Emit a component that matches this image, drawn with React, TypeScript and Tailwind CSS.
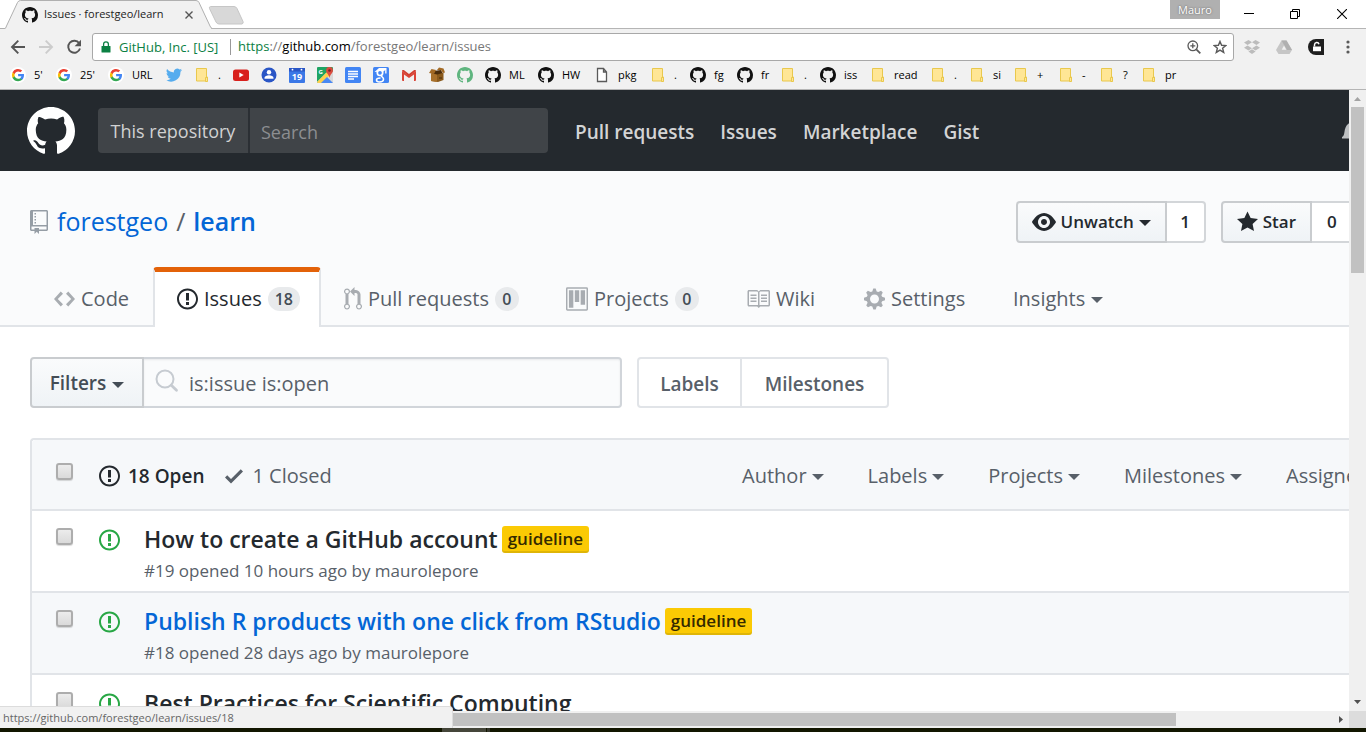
import type { ReactNode } from "react";

const OCTICONS = {
  github: {
    box: "0 0 16 16",
    d: "M8 0C3.58 0 0 3.58 0 8c0 3.54 2.29 6.53 5.47 7.59.4.07.55-.17.55-.38 0-.19-.01-.82-.01-1.49-2.01.37-2.53-.49-2.69-.94-.09-.23-.48-.94-.82-1.13-.28-.15-.68-.52-.01-.53.63-.01 1.08.58 1.23.82.72 1.21 1.87.87 2.33.66.07-.52.28-.87.51-1.07-1.78-.2-3.64-.89-3.64-3.95 0-.87.31-1.59.82-2.15-.08-.2-.36-1.02.08-2.12 0 0 .67-.21 2.2.82.64-.18 1.32-.27 2-.27.68 0 1.36.09 2 .27 1.53-1.04 2.2-.82 2.2-.82.44 1.1.16 1.92.08 2.12.51.56.82 1.27.82 2.15 0 3.07-1.87 3.75-3.65 3.95.29.25.54.73.54 1.48 0 1.07-.01 1.93-.01 2.2 0 .21.15.46.55.38A8.013 8.013 0 0 0 16 8c0-4.42-3.58-8-8-8z",
  },
  issue: {
    box: "0 0 14 16",
    d: "M7 2.3c3.14 0 5.7 2.56 5.7 5.7s-2.56 5.7-5.7 5.7A5.71 5.71 0 0 1 1.3 8c0-3.14 2.56-5.7 5.7-5.7zM7 1C3.14 1 0 4.14 0 8s3.14 7 7 7 7-3.14 7-7-3.14-7-7-7zm1 3H6v5h2V4zm0 6H6v2h2v-2z",
  },
  code: {
    box: "0 0 14 16",
    d: "M9.5 3L8 4.5 11.5 8 8 11.5 9.5 13 14 8 9.5 3zm-5 0L0 8l4.5 5L6 11.5 2.5 8 6 4.5 4.5 3z",
  },
  pull: {
    box: "0 0 12 16",
    d: "M11 11.28V5c-.03-.78-.34-1.47-.94-2.06C9.46 2.35 8.78 2.03 8 2H7V0L4 3l3 3V4h1c.27.02.48.11.69.31.21.2.3.42.31.69v6.28A1.993 1.993 0 0 0 10 15a1.993 1.993 0 0 0 1-3.72zm-1 2.92c-.66 0-1.2-.55-1.2-1.2 0-.65.55-1.2 1.2-1.2.65 0 1.2.55 1.2 1.2 0 .65-.55 1.2-1.2 1.2zM4 3c0-1.11-.89-2-2-2a1.993 1.993 0 0 0-1 3.72v6.56A1.993 1.993 0 0 0 2 15a1.993 1.993 0 0 0 1-3.72V4.72c.59-.34 1-.98 1-1.72zm-.8 10c0 .66-.55 1.2-1.2 1.2-.65 0-1.2-.55-1.2-1.2 0-.65.55-1.2 1.2-1.2.65 0 1.2.55 1.2 1.2zM2 4.2C1.34 4.2.8 3.65.8 3c0-.65.55-1.2 1.2-1.2.65 0 1.2.55 1.2 1.2 0 .65-.55 1.2-1.2 1.2z",
  },
  project: {
    box: "0 0 15 16",
    d: "M10 12h3V2h-3v10zm-4-2h3V2H6v8zm-4 4h3V2H2v12zm-1 1h13V1H1v14zM14 0H1a1 1 0 0 0-1 1v14a1 1 0 0 0 1 1h13a1 1 0 0 0 1-1V1a1 1 0 0 0-1-1z",
  },
  book: {
    box: "0 0 16 16",
    d: "M3 5h4v1H3V5zm0 3h4V7H3v1zm0 2h4V9H3v1zm11-5h-4v1h4V5zm0 2h-4v1h4V7zm0 2h-4v1h4V9zm2-6v9c0 .55-.45 1-1 1H9.5l-1 1-1-1H2c-.55 0-1-.45-1-1V3c0-.55.45-1 1-1h5.5l1 1 1-1H15c.55 0 1 .45 1 1zm-8 .5L7.5 3H2v9h6V3.5zm7-.5H9.5l-.5.5V12h6V3z",
  },
  gear: {
    box: "0 0 14 16",
    d: "M14 8.77v-1.6l-1.94-.64-.45-1.09.88-1.84-1.13-1.13-1.81.91-1.09-.45-.69-1.92h-1.6l-.63 1.94-1.11.45-1.84-.88-1.13 1.13.91 1.81-.45 1.09L0 7.23v1.59l1.94.64.45 1.09-.88 1.84 1.13 1.13 1.81-.91 1.09.45.69 1.92h1.59l.63-1.94 1.11-.45 1.84.88 1.13-1.13-.92-1.81.47-1.09L14 8.75v.02zM7 11c-1.66 0-3-1.34-3-3s1.34-3 3-3 3 1.34 3 3-1.34 3-3 3z",
  },
  repo: {
    box: "0 0 12 16",
    d: "M4 9H3V8h1v1zm0-3H3v1h1V6zm0-2H3v1h1V4zm0-2H3v1h1V2zm8-1v12c0 .55-.45 1-1 1H6v2l-1.5-1.5L3 16v-2H1c-.55 0-1-.45-1-1V1c0-.55.45-1 1-1h10c.55 0 1 .45 1 1zm-1 10H1v2h2v-1h3v1h5v-2zm0-10H2v9h9V1z",
  },
  eye: {
    box: "0 0 16 16",
    d: "M8.06 2C3 2 0 8 0 8s3 6 8.06 6C13 14 16 8 16 8s-3-6-7.94-6zM8 12c-2.2 0-4-1.78-4-4 0-2.2 1.8-4 4-4 2.22 0 4 1.8 4 4 0 2.22-1.78 4-4 4zm2-4c0 1.11-.89 2-2 2-1.11 0-2-.89-2-2 0-1.11.89-2 2-2 1.11 0 2 .89 2 2z",
  },
  star: {
    box: "0 0 14 16",
    d: "M14 6l-4.9-.64L7 1 4.9 5.36 0 6l3.6 3.26L2.67 14 7 11.67 11.33 14l-.93-4.74L14 6z",
  },
  check: { box: "0 0 12 16", d: "M12 5l-8 8-4-4 1.5-1.5L4 10l6.5-6.5L12 5z" },
  bell: {
    box: "0 0 14 16",
    d: "M14 12v1H0v-1l.73-.58c.77-.77.81-2.55 1.19-4.42C2.69 3.23 6 2 6 2c0-.55.45-1 1-1s1 .45 1 1c0 0 3.39 1.23 4.16 5 .38 1.88.42 3.66 1.19 4.42l.66.58H14zm-7 4c1.11 0 2-.89 2-2H5c0 1.11.89 2 2 2z",
  },
};

function Octicon({ name, className }: { name: keyof typeof OCTICONS; className: string }) {
  return (
    <svg viewBox={OCTICONS[name].box} className={`shrink-0 fill-current ${className}`} aria-hidden="true">
      <path fillRule="evenodd" d={OCTICONS[name].d} />
    </svg>
  );
}

function Caret() {
  return (
    <svg viewBox="0 0 12 6" className="mt-[2px] h-[6px] w-3 shrink-0 fill-current" aria-hidden="true">
      <path d="M0 0h12L6 6z" />
    </svg>
  );
}

/* Bookmark bar icons */

const Svg16 = ({ children }: { children: ReactNode }) => (
  <svg viewBox="0 0 16 16" className="size-4 shrink-0" aria-hidden="true">
    {children}
  </svg>
);

const GoogleIcon = () => (
  <Svg16>
    <circle cx="8" cy="8" r="8" fill="#fff" />
    <path d="M14 8.2c0-.5 0-.9-.1-1.3H8.1v2.4h3.3c-.1.8-.6 1.4-1.200 1.900v1.600h2c1.100-1.100 1.800-2.700 1.800-4.600z" fill="#4285f4" />
    <path d="M8.100 14.200c1.600 0 3-.5 4.100-1.400l-2-1.600c-.5.400-1.200.600-2.100.600-1.600 0-2.900-1.100-3.400-2.500H2.600v1.600c1 2 3.100 3.300 5.500 3.300z" fill="#34a853" />
    <path d="M4.700 9.300a3.700 3.700 0 0 1 0-2.400V5.300H2.600a6.100 6.100 0 0 0 0 5.600z" fill="#fbbc05" />
    <path d="M8.100 4.400c.9 0 1.700.3 2.300.9l1.800-1.800A6.200 6.200 0 0 0 2.600 5.300l2.100 1.600c.5-1.400 1.800-2.500 3.400-2.500z" fill="#ea4335" />
  </Svg16>
);

const TwitterIcon = () => (
  <Svg16>
    <path
      fill="#55acee"
      d="M16 3a6.600 6.600 0 0 1-1.900.5A3.300 3.300 0 0 0 15.600 1.700a6.600 6.600 0 0 1-2.100.8 3.300 3.300 0 0 0-5.600 3A9.300 9.300 0 0 1 1.100 2.100a3.300 3.300 0 0 0 1 4.400 3.300 3.300 0 0 1-1.500-.4c0 1.600 1.100 3 2.600 3.300a3.300 3.300 0 0 1-1.500.1c.4 1.300 1.600 2.200 3.100 2.300A6.600 6.600 0 0 1 0 13.100 9.300 9.300 0 0 0 14.400 4.700 6.700 6.700 0 0 0 16 3z"
    />
  </Svg16>
);

const FolderIcon = () => (
  <Svg16>
    <path d="M2.500 1.500h10v8.500h1v4h-11z" fill="#ffe695" stroke="#e9c84d" />
    <path d="M11.500 10.500h2v4h-2z" fill="#ffe695" stroke="#e9c84d" />
  </Svg16>
);

const YoutubeIcon = () => (
  <Svg16>
    <rect x="0" y="2.500" width="16" height="11.500" rx="2.500" fill="#d8201c" />
    <path d="M6.300 5.600v5l4.400-2.500z" fill="#fff" />
  </Svg16>
);

const ContactsIcon = () => (
  <Svg16>
    <circle cx="8" cy="8" r="7.500" fill="#2a56c6" />
    <circle cx="8" cy="5.200" r="2.200" fill="#fff" />
    <path d="M3.500 10.800c0-3.400 9-3.400 9 0v.9h-9z" fill="#fff" />
  </Svg16>
);

const CalendarIcon = () => (
  <Svg16>
    <rect x="0" y="1" width="16" height="15" rx="1" fill="#3b78e7" />
    <rect x="0" y="1" width="16" height="3.500" fill="#2a56c6" />
    <circle cx="3.500" cy="2.700" r=".9" fill="#fff" />
    <circle cx="12.500" cy="2.700" r=".9" fill="#fff" />
    <text x="8" y="13" textAnchor="middle" fontSize="9" fontWeight="700" fill="#fff" fontFamily="Open Sans">
      19
    </text>
  </Svg16>
);

const MapsIcon = () => (
  <Svg16>
    <rect width="16" height="16" rx="1" fill="#1fa463" />
    <path d="M0 15 9 6l7 7v3H1z" fill="#d8d8d8" />
    <path d="M10 10 16 4v12z" fill="#d8d8d8" />
    <path d="M0 15 10 5l3 3-8 8H1z" fill="#ffd04b" />
    <path d="M4 16l6-6 6 6z" fill="#4a89f3" />
    <text x="1.500" y="6.500" fontSize="6" fontWeight="700" fill="#fff" fontFamily="Open Sans">
      G
    </text>
    <path d="M12.500 0a3.400 3.400 0 0 1 3.400 3.400c0 2.600-2.600 3.200-3.400 7.600-.8-4.400-3.400-5-3.400-7.600A3.400 3.400 0 0 1 12.500 0z" fill="#dd4b3e" />
    <circle cx="12.500" cy="3.500" r="1.300" fill="#7a231d" />
  </Svg16>
);

const DocsIcon = () => (
  <Svg16>
    <rect width="16" height="16" rx="1.500" fill="#4285f4" />
    <path d="M3 4.500h10M3 7h10M3 9.500h10M3 12h6" stroke="#fff" strokeWidth="1.300" />
  </Svg16>
);

const ScholarIcon = () => (
  <Svg16>
    <rect width="16" height="16" rx="1.500" fill="#4285f4" />
    <path d="M1.500 5 6 1h7.500v5.500h-1.300V3L10.500 4.500H9z" fill="#fff" />
    <circle cx="7" cy="5.800" r="2.700" fill="#4285f4" stroke="#fff" strokeWidth="1.700" />
    <path d="M9 8c-2 1.500 1.500 2 1.500 4S8.500 15 6.500 15s-3-.8-3-2 1.500-2 4-2" fill="none" stroke="#fff" strokeWidth="1.600" />
  </Svg16>
);

const GmailIcon = () => (
  <Svg16>
    <path d="M1 3h14v11H1z" fill="#f1efef" />
    <path d="M3 14H2a1 1 0 0 1-1-1V4l7 5 7-5v9a1 1 0 0 1-1 1h-1V7.500l-5 3.600-5-3.600z" fill="#db4437" />
    <path d="M1 4c0-1.200 1.200-1.300 1.800-.9L8 7l5.200-3.900c.6-.4 1.800-.3 1.800.9L8 9.500z" fill="#d23f31" />
  </Svg16>
);

const BoxIcon = () => (
  <Svg16>
    <path d="M2 6.500 8 5l6.500 1v7L9 15l-7-1z" fill="#8a5a1c" />
    <path d="M2 6.500 8 7.500V15l-6-1z" fill="#a8702a" />
    <path d="M4 4l8-1 1.500 3-5 1.500-5-1z" fill="#4b2d0b" />
    <path d="M0 6l2.500-4L7 3 5 7zM8 3l2-2.500 4.500 1L16 5.500l-2 .5-2-3z" fill="#a36a25" />
    <path d="M10 11h3" stroke="#4b2d0b" />
  </Svg16>
);

const FileIcon = () => (
  <Svg16>
    <path d="M3.500 1.500h6l3 3.500v9.500h-9zM9.500 1.500V5h3" fill="#fff" stroke="#5a5a5a" strokeWidth="1.300" />
  </Svg16>
);

const Hub = () => <Octicon name="github" className="size-4 text-[#111]" />;
const GreenHub = () => <Octicon name="github" className="size-4 text-[#5fb57f]" />;

const BOOKMARKS: { icon: () => ReactNode; label: string; width: string; text?: string }[] = [
  { icon: GoogleIcon, label: "Last 5 minutes", text: "5'", width: "w-[46px]" },
  { icon: GoogleIcon, label: "Last 25 minutes", text: "25'", width: "w-[52px]" },
  { icon: GoogleIcon, label: "URL", text: "URL", width: "w-[58px]" },
  { icon: TwitterIcon, label: "Twitter", width: "w-7" },
  { icon: FolderIcon, label: "Folder", text: ".", width: "w-[39px]" },
  { icon: YoutubeIcon, label: "YouTube", width: "w-7" },
  { icon: ContactsIcon, label: "Contacts", width: "w-7" },
  { icon: CalendarIcon, label: "Calendar", width: "w-7" },
  { icon: MapsIcon, label: "Maps", width: "w-7" },
  { icon: DocsIcon, label: "Docs", width: "w-7" },
  { icon: ScholarIcon, label: "Scholar", width: "w-7" },
  { icon: GmailIcon, label: "Gmail", width: "w-7" },
  { icon: BoxIcon, label: "Packages", width: "w-7" },
  { icon: GreenHub, label: "GitHub", width: "w-7" },
  { icon: Hub, label: "ML", text: "ML", width: "w-[53px]" },
  { icon: Hub, label: "HW", text: "HW", width: "w-[56px]" },
  { icon: FileIcon, label: "pkg", text: "pkg", width: "w-[56px]" },
  { icon: FolderIcon, label: "Folder", text: ".", width: "w-[40px]" },
  { icon: Hub, label: "fg", text: "fg", width: "w-[47px]" },
  { icon: Hub, label: "fr", text: "fr", width: "w-[43px]" },
  { icon: FolderIcon, label: "Folder", text: ".", width: "w-[40px]" },
  { icon: Hub, label: "iss", text: "iss", width: "w-[50px]" },
  { icon: FolderIcon, label: "read", text: "read", width: "w-[60px]" },
  { icon: FolderIcon, label: "Folder", text: ".", width: "w-[39px]" },
  { icon: FolderIcon, label: "si", text: "si", width: "w-[44px]" },
  { icon: FolderIcon, label: "Folder", text: "+", width: "w-[45px]" },
  { icon: FolderIcon, label: "Folder", text: "-", width: "w-[41px]" },
  { icon: FolderIcon, label: "Folder", text: "?", width: "w-[42px]" },
  { icon: FolderIcon, label: "pr", text: "pr", width: "w-[50px]" },
];

function TabStrip() {
  return (
    <div className="flex h-7 shrink-0 items-start justify-between bg-white">
      <div className="flex items-start">
        <div className="relative z-10 flex h-[29px] w-[212px] items-center pl-[22px]">
          <svg viewBox="0 0 212 29" className="absolute inset-0 h-[29px] w-[212px]" aria-hidden="true">
            <path d="M5 29 17.500 2.500Q18.500.5 20.500.5H196q2 0 3 2L211.500 29z" fill="#f1f1f1" />
            <path d="M0 28.500h4.500Q6 28.500 6.500 26L17.500 2.500Q18.500.5 20.500.5H196q2 0 3 2L210 26q1 2.500 2.500 2.500" fill="none" stroke="#b0b0b0" />
          </svg>
          <div className="relative flex flex-1 items-center">
            <Octicon name="github" className="size-4 text-[#111]" />
            <span className="ml-[6px] w-[137px] text-[11px] whitespace-nowrap text-[#222]">Issues · forestgeo/learn</span>
            <button type="button" aria-label="Close tab" className="flex size-4 items-center justify-center">
              <svg viewBox="0 0 8 8" className="size-2" aria-hidden="true">
                <path d="M.5.5l7 7M7.500.5l-7 7" stroke="#555" strokeWidth="1.400" />
              </svg>
            </button>
          </div>
        </div>
        <button type="button" aria-label="New tab" className="mt-[6px]">
          <svg viewBox="0 0 36 19" className="-ml-1 h-[19px] w-9" aria-hidden="true">
            <path d="M2.500.5H26q2 0 3 2l6 13q.8 2-1 2.500H11q-2 0-3-2L1.500 2.500Q.8.8 2.500.5z" fill="#d8d8d8" stroke="#c6c6c6" />
          </svg>
        </button>
      </div>
      <div className="flex items-start">
        <button type="button" className="mr-[6px] h-[19px] w-[50px] bg-[#b0b0b0] text-[11px] leading-[18px] text-white [text-shadow:0_0_2px_#555]">
          Mauro
        </button>
        <button type="button" aria-label="Minimize" className="flex h-[27px] w-[46px] items-center justify-center">
          <svg viewBox="0 0 10 10" className="size-[10px]" aria-hidden="true">
            <path d="M0 4.500h10" stroke="#000" />
          </svg>
        </button>
        <button type="button" aria-label="Restore" className="flex h-[27px] w-[46px] items-center justify-center">
          <svg viewBox="0 0 10 10" className="size-[10px]" aria-hidden="true">
            <path d="M.5 2.500h7v7h-7zM2.500 2.500v-2h7v7h-2" fill="none" stroke="#000" />
          </svg>
        </button>
        <button type="button" aria-label="Close" className="flex h-[27px] w-12 items-center justify-center">
          <svg viewBox="0 0 10 10" className="size-[10px]" aria-hidden="true">
            <path d="M0 0l10 10M10 0L0 10" stroke="#000" strokeWidth="1.100" />
          </svg>
        </button>
      </div>
    </div>
  );
}

function Toolbar() {
  return (
    <div className="flex h-[34px] shrink-0 items-center border-t border-[#b5b5b5] bg-[#f1f1f1] pt-[3px] pr-[10px] pl-[10px]">
      <button type="button" aria-label="Back" className="size-4">
        <svg viewBox="0 0 16 16" className="size-4" fill="none" stroke="#555" strokeWidth="1.900" aria-hidden="true">
          <path d="M15 8H2M8.300 1.700 2 8l6.300 6.300" />
        </svg>
      </button>
      <button type="button" aria-label="Forward" className="ml-3 size-4">
        <svg viewBox="0 0 16 16" className="size-4" fill="none" stroke="#ccc" strokeWidth="1.900" aria-hidden="true">
          <path d="M1 8h13M7.700 1.700 14 8l-6.300 6.300" />
        </svg>
      </button>
      <button type="button" aria-label="Reload" className="ml-3 size-4">
        <svg viewBox="0 0 16 16" className="size-4" aria-hidden="true">
          <path d="M13.200 4.300A6 6 0 1 0 14 9.500" fill="none" stroke="#555" strokeWidth="1.900" />
          <path d="M15 .8v6.400H8.600z" fill="#555" />
        </svg>
      </button>
      <div className="ml-[10px] flex h-7 min-w-0 flex-1 items-center rounded-[3px] border border-[#a8a8a8] bg-white px-[6px] text-[13px] whitespace-nowrap">
        <svg viewBox="0 0 10 12" className="ml-[2px] h-3 w-[10px]" aria-hidden="true">
          <path d="M1 5h8q.5 0 .5.5V11q0 .5-.5.5H1Q.5 11.500.5 11V5.500Q.5 5 1 5z" fill="#0b8043" />
          <path d="M2.600 5.500V3.200a2.400 2.400 0 0 1 4.800 0v2.300" fill="none" stroke="#0b8043" strokeWidth="1.300" />
        </svg>
        <span className="ml-2 w-[112px] border-r border-[#999] leading-4 text-[#0b8043]">GitHub, Inc. [US]</span>
        <div role="textbox" aria-label="Address" className="ml-[7px] flex-1 text-[#777]">
          <span className="text-[#0b8043]">https</span>://<span className="text-black">github.com</span>/forestgeo/learn/issues
        </div>
        <button type="button" aria-label="Zoom" className="mr-3 size-[14px]">
          <svg viewBox="0 0 14 14" className="size-[14px]" fill="none" stroke="#5a5a5a" strokeWidth="1.300" aria-hidden="true">
            <circle cx="5.800" cy="5.800" r="4.800" />
            <path d="M9.300 9.300l4 4" strokeWidth="1.800" />
            <path d="M3.300 5.800h5M5.800 3.300v5" />
          </svg>
        </button>
        <button type="button" aria-label="Bookmark this page" className="size-[14px]">
          <svg viewBox="0 0 14 14" className="size-[14px]" aria-hidden="true">
            <path d="M7 1.400l1.600 3.900 4.300.3-3.300 2.700 1.100 4.100L7 10.100l-3.700 2.300 1.100-4.100L1.100 5.600l4.300-.3z" fill="none" stroke="#5a5a5a" strokeWidth="1.400" />
          </svg>
        </button>
      </div>
      <button type="button" aria-label="Dropbox" className="ml-[10px] size-4">
        <svg viewBox="0 0 16 16" className="size-4" fill="#bcbcbc" aria-hidden="true">
          <path d="M4.500 1 8 3.300 3.500 6 0 3.500zM11.500 1 8 3.300 12.500 6 16 3.500zM3.500 6.500 8 9.200 4.500 11.500 0 8.800zM12.500 6.500 8 9.200l3.500 2.300L16 8.800zM8 10.200l3.600 2.300L8 15l-3.600-2.500z" />
        </svg>
      </button>
      <button type="button" aria-label="Drive" className="ml-4 size-4">
        <svg viewBox="0 0 16 16" className="size-4" aria-hidden="true">
          <path d="M5.500 1.500h5L16 11l-2.500 4h-11L0 11z" fill="#c6c6c6" />
          <path d="M5.500 1.500h5L16 11h-5z" fill="#b0b0b0" />
          <path d="M8 6.500l2.300 4.300H5.700z" fill="#f1f1f1" />
        </svg>
      </button>
      <button type="button" aria-label="Lock extension" className="ml-4 size-4">
        <svg viewBox="0 0 16 16" className="size-4" aria-hidden="true">
          <path d="M8 0h8v16H8A8 8 0 0 1 8 0z" fill="#1f1f1f" />
          <path d="M5 7.500h8v4.700H5z" fill="#fff" />
          <path d="M6.500 7.500V5.800a2.300 2.300 0 0 1 4.500-.6" fill="none" stroke="#fff" strokeWidth="1.500" />
        </svg>
      </button>
      <button type="button" aria-label="Menu" className="ml-4 flex w-4 justify-center">
        <svg viewBox="0 0 4 14" className="h-[14px] w-1" fill="#5a5a5a" aria-hidden="true">
          <circle cx="2" cy="2" r="1.600" />
          <circle cx="2" cy="7" r="1.600" />
          <circle cx="2" cy="12" r="1.600" />
        </svg>
      </button>
    </div>
  );
}

function BookmarkBar() {
  return (
    <nav aria-label="Bookmarks" className="flex h-7 shrink-0 items-center overflow-hidden border-b border-[#b5b5b5] bg-[#f1f1f1] pb-px pl-[10px]">
      {BOOKMARKS.map(({ icon: Icon, label, text, width }, i) => (
        <a key={i} href="#" aria-label={label} className={`flex shrink-0 items-center gap-2 text-[11px] text-black ${width}`}>
          <Icon />
          {text && <span>{text}</span>}
        </a>
      ))}
    </nav>
  );
}

function SiteHeader() {
  return (
    <header className="flex h-[81px] shrink-0 items-center overflow-hidden bg-[#24292e] pl-[27px] whitespace-nowrap">
      <a href="#" aria-label="Homepage">
        <Octicon name="github" className="size-12 text-white" />
      </a>
      <form className="ml-[23px] flex h-[45px] w-[450px] overflow-hidden rounded bg-[#404448]">
        <label htmlFor="site-search" className="flex w-[152px] shrink-0 items-center justify-center border-r-2 border-[#2b2f34] pt-[2px] text-[18px] text-[#d0d1d2]">
          This repository
        </label>
        <input id="site-search" type="text" placeholder="Search" className="min-w-0 flex-1 bg-transparent px-[11px] pt-1 text-[18px] text-white outline-none placeholder:text-[#8c8e91]" />
      </form>
      <nav className="ml-[27px] flex gap-[26px] pt-1 text-[19px] font-semibold text-[#d3d4d5]">
        <a href="#">Pull requests</a>
        <a href="#">Issues</a>
        <a href="#">Marketplace</a>
        <a href="#">Gist</a>
      </nav>
      <a href="#" aria-label="Notifications" className="ml-auto w-[7px] overflow-hidden text-[#bfc1c3]">
        <Octicon name="bell" className="h-6 w-[21px]" />
      </a>
    </header>
  );
}

function SocialGroup({ children, count, clipped }: { children: ReactNode; count: string; clipped?: boolean }) {
  return (
    <div className="flex h-[42px] text-[17px] font-semibold text-[#24292e]">
      <button type="button" className="flex items-center gap-[5px] rounded-l border-2 border-[#c9cccf] bg-linear-to-b from-[#fafbfc] to-[#eff3f6] px-[14px]">
        {children}
      </button>
      <a
        href="#"
        className={
          clipped
            ? "flex w-[37px] items-center border-y-2 border-[#d3d6d9] bg-white pl-[15px]"
            : "flex w-[39px] items-center justify-center rounded-r border-2 border-l-0 border-[#d3d6d9] bg-white"
        }
      >
        {count}
      </a>
    </div>
  );
}

function Counter({ children }: { children: ReactNode }) {
  return <span className="flex h-6 min-w-6 items-center justify-center rounded-full bg-[#e8eaec] px-[7px] text-[16px] font-semibold text-[#444d56]">{children}</span>;
}

function RepoHead() {
  const tab = "flex h-full items-center gap-[6px] pt-[6px] text-[#586069]";
  return (
    <div className="flex h-[156px] shrink-0 flex-col overflow-hidden bg-[#fafbfc] whitespace-nowrap">
      <div className="mt-[30px] flex h-[42px] shrink-0 items-center justify-between pl-[30px]">
        <h1 className="flex items-center text-[25px] text-[#586069]">
          <Octicon name="repo" className="h-6 w-[18px] text-[#959da5]" />
          <a href="#" className="ml-[9px] text-[#0366d6]">
            forestgeo
          </a>
          <span className="px-2">/</span>
          <a href="#" className="font-semibold text-[#0366d6]">
            learn
          </a>
        </h1>
        <div className="flex gap-[15px]">
          <SocialGroup count="1">
            <Octicon name="eye" className="size-6" />
            Unwatch
            <Caret />
          </SocialGroup>
          <SocialGroup count="0" clipped>
            <Octicon name="star" className="h-6 w-[21px]" />
            Star
          </SocialGroup>
        </div>
      </div>
      <nav aria-label="Repository" className="relative mt-6 flex h-[60px] shrink-0 border-b-2 border-[#e1e4e8] text-[20px]">
        <a href="#" className={`${tab} w-[153px] pl-[54px]`}>
          <Octicon name="code" className="h-6 w-[21px] opacity-50" />
          Code
        </a>
        <a href="#" aria-current="page" className="flex h-[60px] w-[168px] items-center gap-[6px] rounded-t border-x-2 border-t-[5px] border-x-[#e1e4e8] border-t-[#e36209] bg-white pb-[2px] pl-[22px] text-[#24292e]">
          <Octicon name="issue" className="h-6 w-[21px]" />
          Issues
          <Counter>18</Counter>
        </a>
        <a href="#" className={`${tab} w-[221px] pl-[23px]`}>
          <Octicon name="pull" className="h-6 w-[18px] opacity-50" />
          Pull requests
          <Counter>0</Counter>
        </a>
        <a href="#" className={`${tab} w-[181px] pl-6`}>
          <Octicon name="project" className="h-6 w-[22px] opacity-50" />
          Projects
          <Counter>0</Counter>
        </a>
        <a href="#" className={`${tab} w-[117px] pl-[23px]`}>
          <Octicon name="book" className="size-6 opacity-50" />
          Wiki
        </a>
        <a href="#" className={`${tab} w-[150px] pl-6`}>
          <Octicon name="gear" className="h-6 w-[21px] opacity-50" />
          Settings
        </a>
        <button type="button" className={`${tab} pl-[23px]`}>
          Insights
          <Caret />
        </button>
      </nav>
    </div>
  );
}

function SearchRow() {
  return (
    <div className="flex h-[51px] shrink-0 text-[19px]">
      <form className="flex w-[592px]">
        <button type="button" className="flex w-[114px] shrink-0 items-center justify-center gap-[6px] rounded-l border-2 border-[#c9cccf] bg-linear-to-b from-[#fafbfc] to-[#eff3f6] pt-[2px] font-semibold text-[#444d56]">
          Filters
          <Caret />
        </button>
        <label htmlFor="issue-search" className="flex min-w-0 flex-1 items-center rounded-r border-2 border-l-0 border-[#d1d5da] bg-[#fafbfc] pl-[11px] shadow-[inset_0_1px_2px_rgba(27,31,35,0.075)]">
          <svg viewBox="0 0 24 24" className="mb-1 size-6 shrink-0" fill="none" stroke="#c6cbd1" strokeLinecap="round" aria-hidden="true">
            <circle cx="10" cy="10" r="8.500" strokeWidth="2" />
            <path d="M16.300 16.300l5.200 5" strokeWidth="2.800" />
          </svg>
          <input id="issue-search" aria-label="Search issues" type="text" defaultValue="is:issue is:open" className="ml-[10px] min-w-0 flex-1 bg-transparent pt-[2px] text-[20px] text-[#586069] outline-none" />
        </label>
      </form>
      <div className="ml-[15px] flex rounded border-2 border-[#e1e4e8] font-semibold text-[#586069]">
        <a href="#" className="flex w-[103px] items-center justify-center border-r-2 border-[#e1e4e8] pt-1">
          Labels
        </a>
        <a href="#" className="flex w-[145px] items-center justify-center pt-1">
          Milestones
        </a>
      </div>
    </div>
  );
}

function Check({ label }: { label: string }) {
  return (
    <input
      type="checkbox"
      aria-label={label}
      className="size-[17px] shrink-0 appearance-none rounded-[3px] border-2 border-[#adadad] bg-linear-to-b from-[#ececec] to-[#dadada] shadow-[0_1px_1px_rgba(0,0,0,0.15)]"
    />
  );
}

const ISSUES = [
  { title: "How to create a GitHub account", meta: "#19 opened 10 hours ago by maurolepore", guideline: true, hovered: false },
  { title: "Publish R products with one click from RStudio", meta: "#18 opened 28 days ago by maurolepore", guideline: true, hovered: true },
  { title: "Best Practices for Scientific Computing", meta: "", guideline: false, hovered: false },
];

function IssueList() {
  const menu = "flex items-center gap-[5px]";
  return (
    <section aria-label="Issues" className="mt-[30px] rounded-tl border-t-2 border-l-2 border-[#e1e4e8] whitespace-nowrap">
      <div className="flex h-[69px] items-center rounded-tl bg-[#f6f8fa] pt-[3px] pl-6 text-[20px] text-[#586069]">
        <div className="mb-[9px] flex">
          <Check label="Select all issues" />
        </div>
        <a href="#" className="ml-[26px] flex items-center gap-2 text-[19px] font-semibold text-[#24292e]">
          <Octicon name="issue" className="h-6 w-[21px]" />
          18 Open
        </a>
        <a href="#" className="ml-[21px] flex items-center gap-[9px]">
          <Octicon name="check" className="h-6 w-[18px]" />1 Closed
        </a>
        <div className="ml-auto flex gap-11">
          <button type="button" className={menu}>
            Author
            <Caret />
          </button>
          <button type="button" className={menu}>
            Labels
            <Caret />
          </button>
          <button type="button" className={menu}>
            Projects
            <Caret />
          </button>
          <button type="button" className={menu}>
            Milestones
            <Caret />
          </button>
          <button type="button" className="w-[63px] overflow-hidden text-left">
            Assignee
          </button>
        </div>
      </div>
      <ul>
        {ISSUES.map((issue) => (
          <li key={issue.title} className={`flex h-[82px] items-start border-t-2 border-[#e1e4e8] pl-6 ${issue.hovered ? "bg-[#f6f8fa]" : "bg-white"}`}>
            <div className="mt-[17px] flex">
              <Check label={`Select ${issue.title}`} />
            </div>
            <Octicon name="issue" className="mt-[17px] ml-[26px] h-6 w-[21px] text-[#28a745]" />
            <div className="ml-6">
              <div className="mt-[13px] flex h-[30px] items-center">
                <a href="#" className={`text-[23px] leading-[30px] font-semibold ${issue.hovered ? "text-[#0366d6]" : "text-[#24292e]"}`}>
                  {issue.title}
                </a>
                {issue.guideline && (
                  <a href="#" className="ml-1 flex h-[27px] items-center rounded-[3px] bg-[#fbca04] px-[6px] text-[17px] font-semibold text-[#332900] shadow-[inset_0_-2px_0_rgba(27,31,35,0.12)]">
                    guideline
                  </a>
                )}
              </div>
              <p className="mt-[5px] text-[17px] leading-6 text-[#586069]">{issue.meta}</p>
            </div>
          </li>
        ))}
      </ul>
    </section>
  );
}

function VerticalScrollbar() {
  return (
    <div className="flex w-[17px] shrink-0 flex-col items-center bg-[#f0f0f0]">
      <svg viewBox="0 0 17 17" className="size-[17px]" fill="#a3a3a3" aria-hidden="true">
        <path d="M5 11h7L8.500 7z" />
      </svg>
      <div className="h-[166px] w-[13px] bg-[#c1c1c1]" />
      <svg viewBox="0 0 17 17" className="mt-auto size-[17px]" fill="#505050" aria-hidden="true">
        <path d="M5 6h7l-3.500 4z" />
      </svg>
    </div>
  );
}

function BottomBars() {
  return (
    <footer className="relative shrink-0">
      <div className="flex h-[17px] items-center bg-[#f0f0f0]">
        <div className="ml-[440px] h-[13px] w-[736px] bg-[#c1c1c1]" />
        <svg viewBox="0 0 17 17" className="ml-auto size-[17px]" fill="#505050" aria-hidden="true">
          <path d="M7 5v7l4-3.500z" />
        </svg>
        <div className="size-[17px] bg-[#dcdcdc]" />
      </div>
      <div className="absolute bottom-1 left-0 flex h-[22px] w-[453px] items-center rounded-tr border-t border-r border-[#dcdcdc] bg-[#f1f1f1] pt-[2px] pl-[3px] text-[11px] text-[#666]">
        https://github.com/forestgeo/learn/issues/18
      </div>
      <div className="flex h-1 bg-[#121600] pl-[442px]">
        <div className="h-1 w-[44px] bg-[#45463a]" />
        <div className="ml-px h-1 w-[3px] bg-[#35362b]" />
      </div>
    </footer>
  );
}

export default function App() {
  return (
    <div className="flex h-screen flex-col overflow-hidden bg-white font-['Open_Sans','Noto_Sans',sans-serif]">
      <TabStrip />
      <Toolbar />
      <BookmarkBar />
      <div className="flex min-h-0 flex-1">
        <div className="flex min-w-0 flex-1 flex-col overflow-hidden">
          <SiteHeader />
          <RepoHead />
          <main className="flex flex-col pt-[30px] pl-[30px]">
            <SearchRow />
            <IssueList />
          </main>
        </div>
        <VerticalScrollbar />
      </div>
      <BottomBars />
    </div>
  );
}
